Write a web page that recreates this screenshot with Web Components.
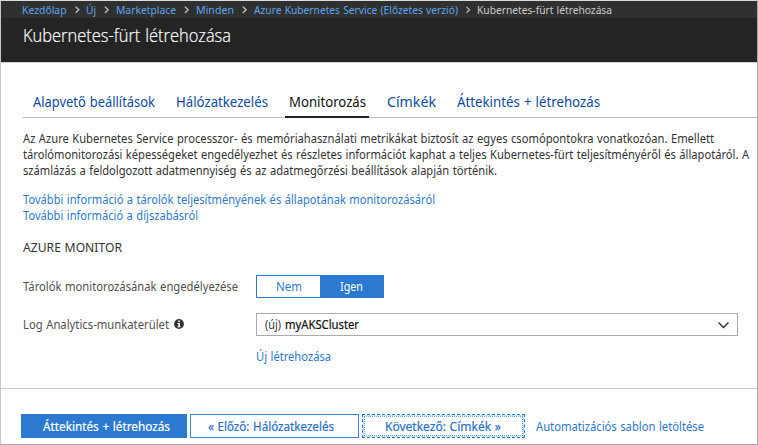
<!DOCTYPE html>
<html lang="hu">
<head>
<meta charset="utf-8">
<title>Kubernetes-fürt létrehozása</title>
<style>
html,body{margin:0;padding:0;background:#fff}
body{width:758px;height:445px;overflow:hidden;font-family:"Noto Sans","Open Sans",sans-serif;font-size:11.7px;line-height:16px;color:#333}
</style>
</head>
<body>
<aks-page></aks-page>
<script>
/* One line of text, condensed horizontally to the given width. */
class FitText extends HTMLElement{
  connectedCallback(){
    const r=this.attachShadow({mode:'open'});
    r.innerHTML='<style>:host{display:block;flex:none;white-space:nowrap}span{display:inline-block;transform-origin:0 50%;word-spacing:.6px}</style><span><slot></slot></span>';
    const w=+this.getAttribute('w'),s=r.querySelector('span');
    this.style.width=w+'px';
    const natural=s.getBoundingClientRect().width;
    if(natural)s.style.transform='scaleX('+w/natural+')';
  }
}
class BreadCrumbs extends HTMLElement{
  connectedCallback(){
    const items=[['Kezdőlap',44.5,19.5],['Új',10,20],['Marketplace',60,20],['Minden',38,20],['Azure Kubernetes Service (Előzetes verzió)',204,19],['Kubernetes-fürt létrehozása',135,0]];
    this.attachShadow({mode:'open'}).innerHTML=`<style>
    :host{display:flex;height:17px;padding-left:21px;background:#303030;color:#5ca6ee;font-size:11.5px;line-height:18px}
    svg{flex:none;height:17px}
    fit-text:last-of-type{color:#ccc}</style>`+items.map(([t,w,g])=>`<fit-text w="${w}">${t}</fit-text>`+(g?`<svg width="${g}" height="17" viewBox="0 0 20 17"><path d="M8.8 5.7l3.4 3.1-3.4 3.1" fill="none" stroke="#bdbdbd" stroke-width="1.3"/></svg>`:'')).join('');
  }
}
class PageTitle extends HTMLElement{
  connectedCallback(){
    this.attachShadow({mode:'open'}).innerHTML=`<style>:host{display:block;box-sizing:border-box;height:45px;padding:5px 0 0 22px;background:#242424;border-bottom:1px solid #d0d0d0;color:#fff;font-family:"Open Sans","Noto Sans",sans-serif;font-weight:300;font-size:17.5px;line-height:24px;-webkit-text-stroke:.2px #fff}</style><fit-text w="208"><slot></slot></fit-text>`;
  }
}
class TabBar extends HTMLElement{
  connectedCallback(){
    this.attachShadow({mode:'open'}).innerHTML=`<style>
    :host{display:flex;align-items:flex-start;height:25px;margin:29px 0 0 22px;padding-left:6px;border-bottom:1px solid #bdbdbd;color:#0f4a9f;font-size:13.5px;line-height:20px}
    div{height:24px;padding:0 4px;margin-right:13px;line-height:20px}
    .big{font-size:14.8px;line-height:18px}
    .on{color:#111;border-bottom:2px solid #222;padding:0 3px 0 4px}</style>
    <div><fit-text w="122">Alapvető beállítások</fit-text></div>
    <div><fit-text w="92">Hálózatkezelés</fit-text></div>
    <div class="big on"><fit-text w="77">Monitorozás</fit-text></div>
    <div class="big" style="padding-left:5px"><fit-text w="49">Címkék</fit-text></div>
    <div><fit-text w="143">Áttekintés + létrehozás</fit-text></div>`;
  }
}
class YesNoToggle extends HTMLElement{
  connectedCallback(){
    this.attachShadow({mode:'open'}).innerHTML=`<style>:host{display:flex;box-sizing:border-box;width:128px;height:23px;border:1px solid #2b79d1;font-size:12.5px;line-height:22px;color:#2b79d1}
    div{flex:1;display:flex;justify-content:center}.on{background:#2b79d1;color:#fff}</style>
    <div><fit-text w="26">Nem</fit-text></div><div class="on"><fit-text w="23">Igen</fit-text></div>`;
  }
}
class SelectBox extends HTMLElement{
  connectedCallback(){
    this.attachShadow({mode:'open'}).innerHTML=`<style>:host{display:flex;box-sizing:border-box;width:482px;height:23px;border:1px solid #aaa;padding:0 7px 0 8px;line-height:20px;color:#333}
    .v{color:#111;margin-left:4px;-webkit-text-stroke:.2px #111}svg{margin:7px 0 0 auto}</style>
    <fit-text w="16">(új)</fit-text><fit-text class="v" w="74">myAKSCluster</fit-text>
    <svg width="13" height="9" viewBox="0 0 13 9"><path d="M1.5 1.5l5 5 5-5" fill="none" stroke="#333" stroke-width="1.4"/></svg>`;
  }
}
class FormRow extends HTMLElement{
  connectedCallback(){
    this.attachShadow({mode:'open'}).innerHTML=`<style>:host{display:flex;height:23px;color:#505050}
    .l{width:233px;flex:none;display:flex;line-height:22px}</style><div class="l"><slot name="label"></slot></div><slot></slot>`;
  }
}
class InfoIcon extends HTMLElement{
  connectedCallback(){
    this.attachShadow({mode:'open'}).innerHTML=`<style>:host{display:block;margin:6px 0 0 5px;height:10px}svg{display:block}</style>
    <svg width="10" height="10" viewBox="0 0 10 10"><circle cx="5" cy="5" r="4.9" fill="#333"/><path d="M4.2 1.6h1.7v1.5H4.2zM3.5 4h2.4v3.3h.7v1H3.5v-1h.8V5h-.8z" fill="#fff"/></svg>`;
  }
}
class ActionButton extends HTMLElement{
  connectedCallback(){
    this.attachShadow({mode:'open'}).innerHTML=`<style>:host{display:flex;box-sizing:border-box;height:24px;border:1px solid #3b85d8;line-height:23px;font-size:12px;color:#2b72c8;-webkit-text-stroke:.2px currentColor}
    :host([kind=primary]){background:#2b79d1;border-color:#2b79d1;color:#fff}
    :host([kind=focus]){border:1px dashed #2b79d1;outline:1px dotted #6ba5e3;outline-offset:-3px;box-shadow:inset 0 0 0 1px #c4e6fb}</style><slot></slot>`;
  }
}
class AksPage extends HTMLElement{
  connectedCallback(){
    this.attachShadow({mode:'open'}).innerHTML=`<style>
    :host{display:flex;flex-direction:column;box-sizing:border-box;width:758px;height:445px;border:1px solid #aaa;border-top-color:#d8dcda;border-left-color:#c8c8c8;overflow:hidden}
    .body{padding-left:22px}
    p{margin:0}
    .desc{padding-top:12px;color:#333}
    .link{color:#3079cc}
    .links{padding-top:13px}
    h2{margin:17px 0 0;font-weight:400;font-size:12.5px;line-height:16px;color:#333}
    .r1{margin-top:19px}.r2{margin-top:15px}.new{margin:12px 0 0 233px}
    .foot{display:flex;gap:3px;margin-top:auto;box-sizing:border-box;height:56px;border-top:1px solid #ccc;padding:25px 0 0 20px}
    .foot .link{line-height:25px;margin-left:8px}
    </style>
    <bread-crumbs></bread-crumbs>
    <page-title>Kubernetes-fürt létrehozása</page-title>
    <tab-bar></tab-bar>
    <div class="body">
      <p class="desc"><fit-text w="691">Az Azure Kubernetes Service processzor- és memóriahasználati metrikákat biztosít az egyes csomópontokra vonatkozóan. Emellett</fit-text><fit-text w="726">tárolómonitorozási képességeket engedélyezhet és részletes információt kaphat a teljes Kubernetes-fürt teljesítményéről és állapotáról. A</fit-text><fit-text w="474">számlázás a feldolgozott adatmennyiség és az adatmegőrzési beállítások alapján történik.</fit-text></p>
      <p class="links link"><fit-text w="412">További információ a tárolók teljesítményének és állapotának monitorozásáról</fit-text><fit-text w="175">További információ a díjszabásról</fit-text></p>
      <h2><fit-text w="99">AZURE MONITOR</fit-text></h2>
      <form-row class="r1"><fit-text slot="label" w="215">Tárolók monitorozásának engedélyezése</fit-text><yes-no-toggle></yes-no-toggle></form-row>
      <form-row class="r2"><fit-text slot="label" w="146">Log Analytics-munkaterület</fit-text><info-icon slot="label"></info-icon><select-box></select-box></form-row>
      <p class="new link"><fit-text w="75">Új létrehozása</fit-text></p>
    </div>
    <div class="foot">
      <action-button kind="primary" style="width:166px;padding-left:21px"><fit-text w="127">Áttekintés + létrehozás</fit-text></action-button>
      <action-button style="width:169px;padding-left:17px"><fit-text w="126">« Előző: Hálózatkezelés</fit-text></action-button>
      <action-button kind="focus" style="width:163px;padding-left:22px"><fit-text w="116">Következő: Címkék »</fit-text></action-button>
      <fit-text class="link" w="168">Automatizációs sablon letöltése</fit-text>
    </div>`;
  }
}
Object.entries({'aks-page':AksPage,'bread-crumbs':BreadCrumbs,'page-title':PageTitle,'tab-bar':TabBar,'form-row':FormRow,'yes-no-toggle':YesNoToggle,'select-box':SelectBox,'info-icon':InfoIcon,'action-button':ActionButton,'fit-text':FitText}).forEach(([n,c])=>customElements.define(n,c));
</script>
</body>
</html>
